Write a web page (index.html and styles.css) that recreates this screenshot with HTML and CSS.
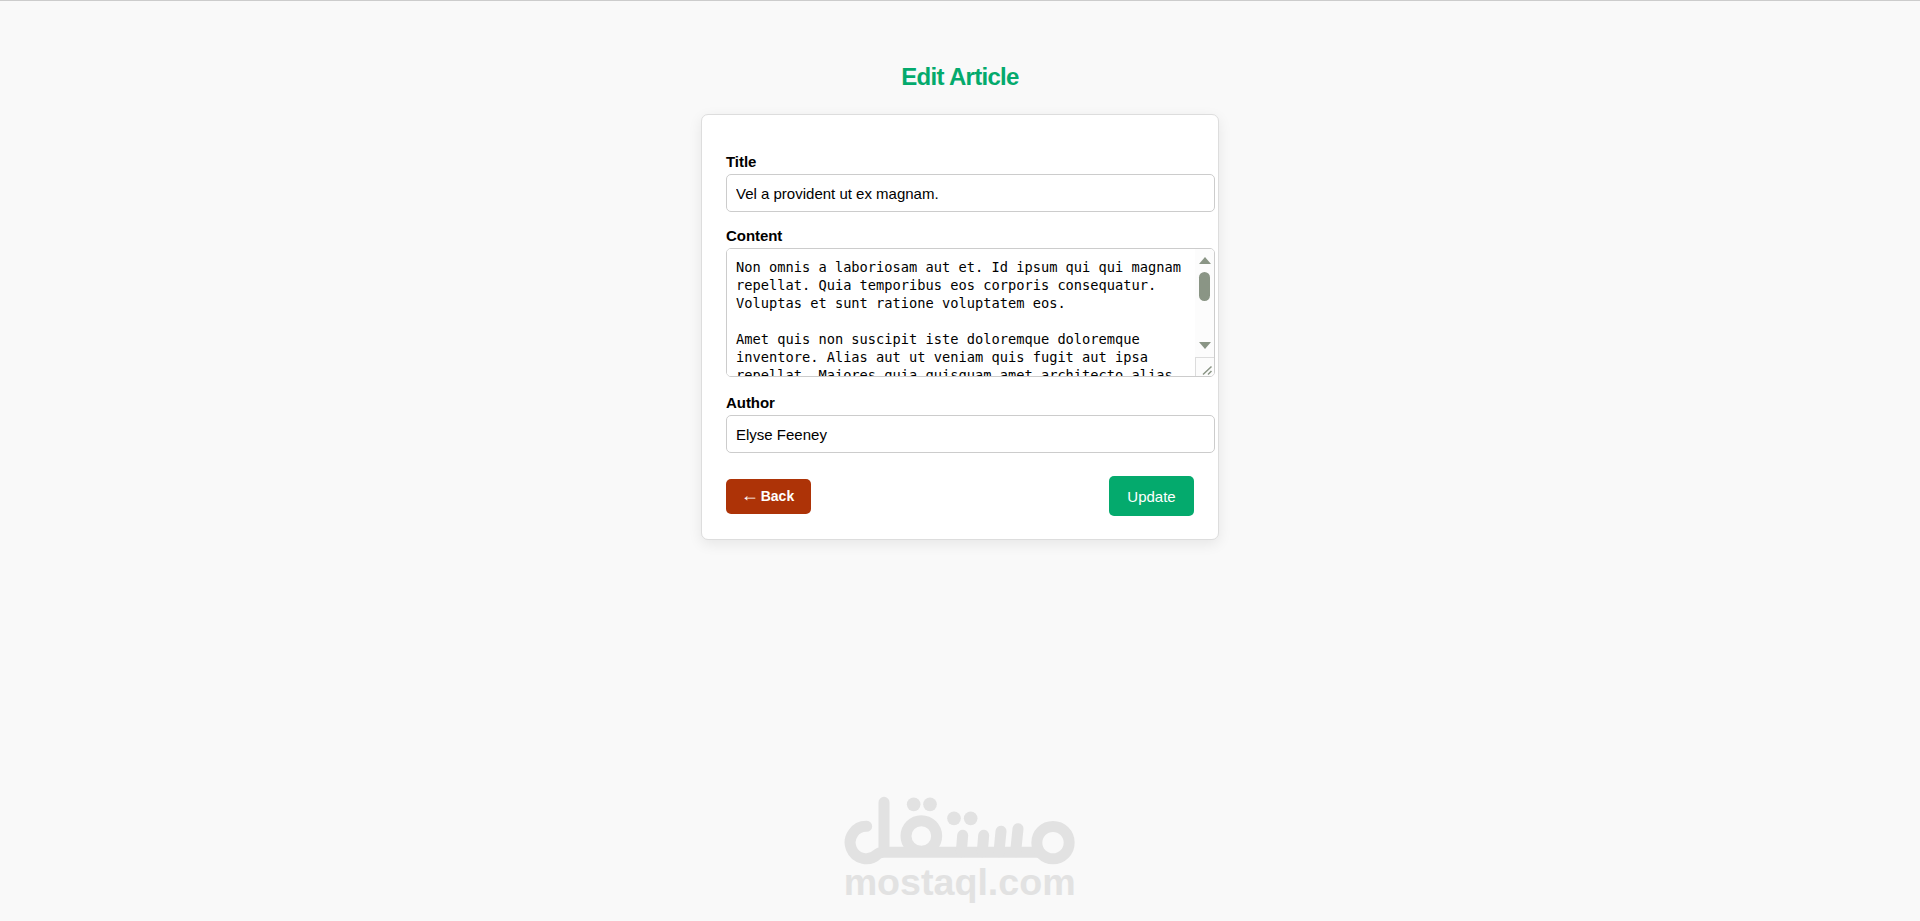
FILE: index.html
```html
<!DOCTYPE html>
<html lang="en">
<head>
  <meta charset="UTF-8">
  <meta name="viewport" content="width=device-width, initial-scale=1.0">
  <title>Edit Article</title>
  <link rel="stylesheet" href="styles.css">
</head>
<body>
  <h1>Edit Article</h1>
  <form class="card">
    <label for="title">Title</label>
    <input type="text" id="title" value="Vel a provident ut ex magnam.">

    <label for="content">Content</label>
    <div class="textarea-box">
      <textarea id="content">Non omnis a laboriosam aut et. Id ipsum qui qui magnam
repellat. Quia temporibus eos corporis consequatur.
Voluptas et sunt ratione voluptatem eos.

Amet quis non suscipit iste doloremque doloremque
inventore. Alias aut ut veniam quis fugit aut ipsa
repellat. Maiores quia quisquam amet architecto alias</textarea>
      <div class="scrollbar">
        <span class="arrow-up"></span>
        <span class="thumb"></span>
        <span class="arrow-down"></span>
        <svg class="resizer" width="19" height="19" viewBox="0 0 19 19">
          <path d="M0 0.5H19M0.5 0V19" stroke="#dcdcdc"/>
          <path d="M8 17.5L16.5 9.5M13 17.5L16.5 14" stroke="#8a9585" stroke-width="1.5" fill="none"/>
        </svg>
      </div>
    </div>

    <label for="author">Author</label>
    <input type="text" id="author" value="Elyse Feeney">

    <div class="buttons">
      <a href="#" class="back"><span class="arrow">←</span> Back</a>
      <button type="button" class="update">Update</button>
    </div>
  </form>

  <svg class="logo" width="260" height="130" viewBox="0 0 780 390">
    <g fill="none" stroke="#e2e2e2" stroke-width="33" stroke-linecap="round">
      <path d="M110 139A48.500 48.500 0 1 0 143 222Q149 217 162 217H625M162 67V210"/>
      <circle cx="274" cy="168" r="46"/>
      <circle cx="669" cy="188" r="48.500"/>
      <path d="M398 166L394 215M461 166L457 215M513 154L507 215M564 146L557 215"/>
    </g>
    <g fill="#e2e2e2">
      <circle cx="251" cy="73" r="20.500"/>
      <circle cx="300" cy="73" r="20.500"/>
      <circle cx="372" cy="115" r="20.500"/>
      <circle cx="422" cy="115" r="20.500"/>
      <text x="41" y="344" textLength="696" lengthAdjust="spacingAndGlyphs">mostaql.com</text>
    </g>
  </svg>
</body>
</html>
```

FILE: styles.css
```css
body {
  margin: 0;
  height: 921px;
  box-sizing: border-box;
  border-top: 1px solid #ccc;
  background-color: #f9f9f9;
  font-family: Arial, "Liberation Sans", sans-serif;
  font-size: 15px;
  display: flex;
  flex-direction: column;
  align-items: center;
  overflow: hidden;
}
h1 {
  margin: 62px 0 23px;
  font-size: 24px;
  line-height: 28px;
  letter-spacing: -0.7px;
  color: #04aa6d;
}
.card {
  box-sizing: border-box;
  width: 518px;
  height: 426px;
  padding: 36px 24px 23px;
  background-color: #fff;
  border: 1px solid #ddd;
  border-radius: 7px;
  box-shadow: 0 4px 14px rgba(0,0,0,0.08);
}
label {
  display: block;
  height: 23px;
  line-height: 21px;
  font-weight: bold;
  letter-spacing: -0.05px;
}
input,
.textarea-box {
  box-sizing: border-box;
  width: calc(100% + 21px);
  margin: 0 0 13px;
  border: 1px solid #ccc;
  border-radius: 5px;
}
input {
  display: block;
  height: 38px;
  padding: 0 9px;
  font-family: inherit;
  font-size: 15px;
}
.textarea-box {
  display: flex;
  height: 129px;
  margin-bottom: 15px;
  overflow: hidden;
}
textarea {
  flex: 1;
  box-sizing: border-box;
  padding: 9px 0 0 9px;
  border: none;
  resize: none;
  overflow: hidden;
  white-space: pre;
  font-family: "DejaVu Sans Mono", monospace;
  font-size: 13.7px;
  line-height: 18px;
}
.scrollbar {
  width: 19px;
  display: flex;
  flex-direction: column;
  align-items: center;
  background-color: #fcfcfc;
}
.arrow-up,
.arrow-down {
  border: 6.5px solid transparent;
  border-top: none;
  border-bottom: 7px solid #8a9585;
  margin-top: 8px;
}
.arrow-down {
  border-bottom: none;
  border-top: 7px solid #8a9585;
  margin-top: 41px;
}
.thumb {
  width: 11px;
  height: 29px;
  margin-top: 8px;
  border-radius: 6px;
  background-color: #8a9585;
}
.resizer {
  margin-top: 8px;
}
.buttons {
  display: flex;
  justify-content: space-between;
  align-items: center;
  margin-top: 23px;
}
.back,
.update {
  box-sizing: border-box;
  width: 85px;
  border-radius: 5px;
  color: #fff;
  text-align: center;
}
.back {
  height: 35px;
  line-height: 34px;
  background-color: #ad3307;
  font-size: 14px;
  font-weight: bold;
  text-decoration: none;
}
.arrow {
  margin: 0 -2px;
  font-size: 18px;
  font-weight: normal;
  line-height: 1;
}
.update {
  height: 40px;
  padding: 0;
  border: none;
  background-color: #04aa6d;
  font-family: inherit;
  font-size: 15px;
}
.logo {
  margin-top: 240px;
}
.logo text {
  font-family: "Liberation Sans", sans-serif;
  font-size: 113px;
  font-weight: bold;
}
```
